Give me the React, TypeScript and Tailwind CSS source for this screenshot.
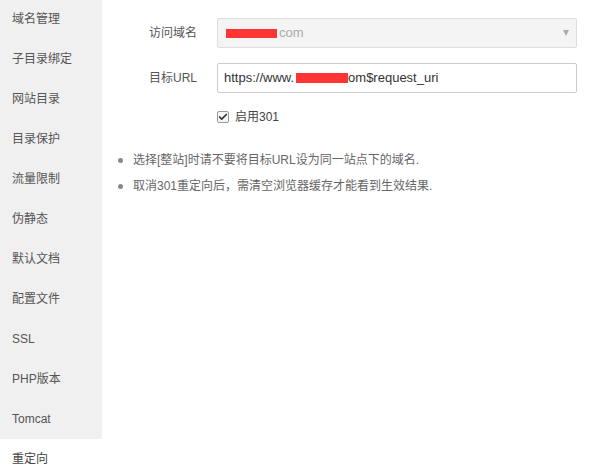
import { Check } from "lucide-react";

const menu = [
  "域名管理",
  "子目录绑定",
  "网站目录",
  "目录保护",
  "流量限制",
  "伪静态",
  "默认文档",
  "配置文件",
  "SSL",
  "PHP版本",
  "Tomcat",
  "重定向",
];

export default function App() {
  return (
    <div className="flex w-[612px] h-[472px] overflow-hidden bg-white text-[12px] text-[#555] font-['Liberation_Sans','Noto_Sans_CJK_SC',sans-serif]">
      {/* Sidebar */}
      <div className="flex flex-col w-[102px] shrink-0 -mt-px">
        {menu.map((item, i) => {
          const active = i === menu.length - 1;
          return (
            <div
              key={item}
              className={
                "h-[40px] shrink-0 flex items-center pl-3 leading-none " +
                (active ? "bg-white text-[#444]" : "bg-[#f0f0f0] text-[#555]")
              }
            >
              {item}
            </div>
          );
        })}
        <div className="flex-1 bg-white" />
      </div>

      {/* Content */}
      <div className="flex-1 pt-[18px]">
        <div className="flex items-center h-[30px]">
          <div className="w-[95px] text-right leading-none">访问域名</div>
          <div className="ml-5 w-[360px] h-[30px] flex items-center justify-between pl-2 pr-[7px] border border-[#ddd] rounded-[2px] bg-[#f4f4f4] text-[13px] text-[#aaa]">
            <span className="flex items-center">
              <span className="inline-block w-[51px] h-[9px] bg-[#ff3434]" />
              <span className="ml-[2px]">com</span>
            </span>
            <span className="w-0 h-0 border-l-[3px] border-r-[3px] border-t-[6px] border-l-transparent border-r-transparent border-t-[#aaa]" />
          </div>
        </div>

        <div className="flex items-center h-[30px] mt-[15px]">
          <div className="w-[95px] text-right leading-none">目标URL</div>
          <div className="ml-5 w-[360px] h-[30px] flex items-center px-[6px] border border-[#ccc] rounded-[2px] bg-white text-[13px] text-[#333]">
            <span>https://www.</span>
            <span className="inline-block w-[52px] h-[10px] bg-[#ff3434] ml-[2px]" />
            <span>om$request_uri</span>
          </div>
        </div>

        <div className="flex items-center mt-[17px] ml-[115px] h-[14px]">
          <span className="w-[12px] h-[12px] border border-[#999] rounded-[2px] bg-[#f5f5f5] flex items-center justify-center">
            <Check size={10} strokeWidth={4} className="text-[#333]" />
          </span>
          <span className="ml-[6px] leading-none text-[#444]">启用301</span>
        </div>

        <ul className="mt-[23px] ml-4 text-[#666]">
          <li className="flex items-center h-[26px]">
            <span className="w-[5px] h-[5px] rounded-full bg-[#888] mr-[10px]" />
            选择[整站]时请不要将目标URL设为同一站点下的域名.
          </li>
          <li className="flex items-center h-[26px]">
            <span className="w-[5px] h-[5px] rounded-full bg-[#888] mr-[10px]" />
            取消301重定向后，需清空浏览器缓存才能看到生效结果.
          </li>
        </ul>
      </div>
    </div>
  );
}
